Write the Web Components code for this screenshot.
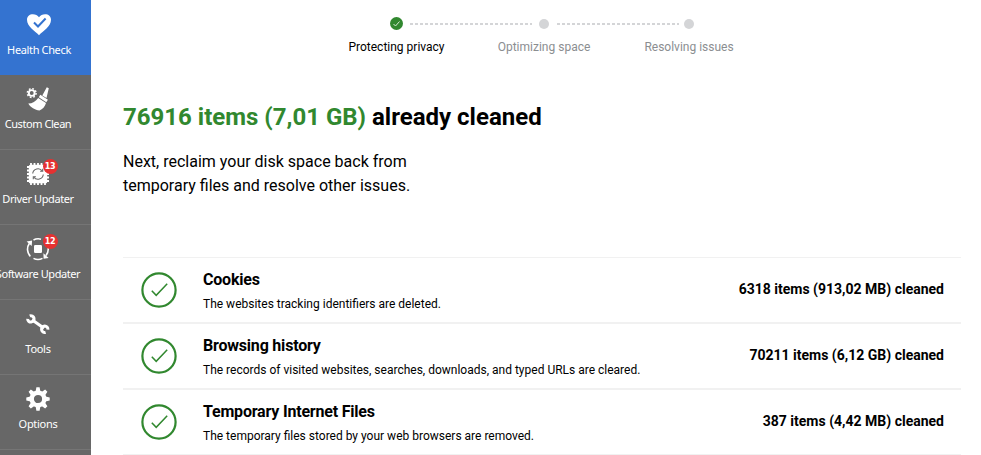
<!DOCTYPE html>
<html lang="en">
<head>
<meta charset="utf-8">
<title>Health Check</title>
<style>
html,body{margin:0;height:100%;overflow:hidden;background:#fff}
</style>
</head>
<body>
<cleaner-app></cleaner-app>
<script>
const define = (name, css, html, init) => customElements.define(name, class extends HTMLElement {
  constructor() {
    super();
    this.attachShadow({ mode: 'open' });
  }
  connectedCallback() {
    this.shadowRoot.innerHTML = `<style>*{box-sizing:border-box}${css}</style>${html}`;
    if (init) init(this, this.shadowRoot);
  }
});

const icons = {
  heart: `<g transform="translate(0 -.8)"><path fill="#fff" d="M12 23C8 18.500 0 14.500 0 7.500 0 4 2.600 2 5.900 2c2.600 0 4.700 1.200 6.100 3 1.400-1.800 3.500-3 6.100-3C21.400 2 24 4 24 7.500c0 7-8 11-12 15.500z"/><path d="M7 10.300l4 4 7.600-8" fill="none" stroke="#3473d0" stroke-width="2"/></g>`,
  broom: `<circle cx="5.700" cy="6" r="2.900" fill="none" stroke="#fff" stroke-width="1.900"/><circle cx="5.700" cy="6" r="4.400" fill="none" stroke="#fff" stroke-width="1.500" stroke-dasharray="1.728 1.728"/>
    <path fill="#fff" d="M20.800.2l2 1L20.500 11l-4.200-2.600zM14.300 7.800l7.600 4.900-1.600 2.500-7.500-4.900zM12.200 10.900l7.800 5.200c-1 3.700-3.500 6.300-6.500 7.400-4.500-.5-9-3-11.200-7 4.200-.2 7.400-2.100 9.900-5.600z"/>`,
  chip: `<path stroke="#fff" stroke-width="1.800" d="M5 1v22M8.500 1v22M12 1v22M15.500 1v22M19 1v22M1 5h22M1 8.500h22M1 12h22M1 15.500h22M1 19h22"/><rect x="2.800" y="2.800" width="18.400" height="18.400" rx="1.500" fill="#fff"/>
    <g fill="none" stroke="#676767" stroke-width="1.100"><path d="M6.700 11.500A5.300 5.300 0 0 1 16.300 9M17.300 12.500A5.300 5.300 0 0 1 7.700 15"/><path d="M16.700 6.700v2.600h-2.600M7.300 17.300v-2.600h2.600"/></g>`,
  software: `<g fill="none" stroke="#fff" stroke-width="1.600"><path d="M4.400 19.400A10.300 10.300 0 0 1 3.300 6.500M7.500 3A10.300 10.300 0 0 1 15 2.200M22.100 10.500A10.300 10.300 0 0 1 20 18.500M16.500 21.400A10.300 10.300 0 0 1 7.500 21.400"/></g>
    <rect x="8" y="8" width="8" height="8" rx="1.200" fill="#fff"/><path fill="#fff" d="M.6 4.400l5.500-1-.4 5.500zM17.400 16.300l.2 5.500 5-.9z"/>`,
  wrench: `<path stroke="#fff" stroke-width="3" d="M6 7.800l12 8.400"/>
    <g fill="none" stroke="#fff" stroke-width="3"><path d="M3.200 4.200A3.200 3.200 0 1 0 6.800 4.200" transform="rotate(-55 5 7)"/><path d="M17.200 15.200A3.200 3.200 0 1 0 20.800 15.200" transform="rotate(130 19 17.500)"/></g>`,
  gear: `<circle cx="12" cy="12" r="6.300" fill="none" stroke="#fff" stroke-width="4.400"/>
    <g fill="#fff"><path d="M9.600 4.500l.8-4.200h3.200l.8 4.200zM9.600 19.500l.8 4.200h3.200l.8-4.200zM4.500 9.600L.3 10.400v3.200l4.200.8zM19.500 9.600l4.200.8v3.200l-4.200.8z"/><path transform="rotate(45 12 12)" d="M9.600 4.500l.8-4.200h3.200l.8 4.200zM9.600 19.500l.8 4.200h3.200l.8-4.200zM4.500 9.600L.3 10.400v3.200l4.200.8zM19.500 9.600l4.200.8v3.200l-4.200.8z"/></g>`
};

define('nav-item', `
  :host{display:flex;flex-direction:column;align-items:center;width:76px;height:75px;padding-top:12px;position:relative}
  svg{display:block;width:24px;height:24px;flex:none}
  .label{margin-top:5px;white-space:nowrap;line-height:16px}
  .badge{position:absolute;left:42.500px;top:9px;width:15px;height:15px;border-radius:50%;background:#e63131;font:bold 8px/15px "DejaVu Sans",sans-serif;letter-spacing:-.2px;text-align:center}
  .badge:empty{display:none}
`, `<svg viewBox="0 0 24 24"></svg><span class="label"><slot></slot></span><span class="badge"></span>`, (el, root) => {
  root.querySelector('svg').innerHTML = icons[el.getAttribute('icon')];
  root.querySelector('.badge').textContent = el.getAttribute('badge') || '';
  root.querySelector('.label').style.letterSpacing = el.getAttribute('tracking') || '';
});

define('side-nav', `
  :host{display:flex;flex-direction:column;width:91px;height:455px;background:#676767;overflow:hidden;color:#fff;font:11px "Noto Sans",sans-serif}
  .row{flex:none;height:75px;border-bottom:1px solid #757575}
  .row.active{background:#3473d0;border:0;padding:1px 0 0 1px}
`, `
  <div class="row active"><nav-item icon="heart" tracking="-.36px">Health Check</nav-item></div>
  <div class="row"><nav-item icon="broom" tracking="-.44px">Custom Clean</nav-item></div>
  <div class="row"><nav-item icon="chip" badge="13" tracking="-.4px">Driver Updater</nav-item></div>
  <div class="row"><nav-item icon="software" badge="12" tracking="-.42px">Software Updater</nav-item></div>
  <div class="row"><nav-item icon="wrench" tracking="-.3px">Tools</nav-item></div>
  <div class="row"><nav-item icon="gear" tracking="-.3px">Options</nav-item></div>
  <div class="row"></div>
`);

define('progress-step', `
  :host{display:flex;flex-direction:column;align-items:center;color:#8b8e91;font-size:12px}
  .dot{height:14px;display:flex;align-items:center}
  i{width:10px;height:10px;border-radius:50%;background:#d4d5d7}
  svg{display:none;width:13px;height:13px;margin-bottom:1px}
  :host([done]){color:#000}
  :host([done]) i{display:none}
  :host([done]) svg{display:block}
  span{white-space:nowrap;line-height:16px;margin-top:8px}
`, `<div class="dot"><i></i><svg viewBox="0 0 13 13"><circle cx="6.500" cy="6.500" r="6.500" fill="#31882f"/><path d="M3.500 7l2 2 4-4.500" fill="none" stroke="#d5ead3"/></svg></div><span><slot></slot></span>`);

define('progress-steps', `
  :host{display:flex;padding-left:292px}
  .line{width:122px;height:2px;margin-top:6px;background:repeating-linear-gradient(90deg,#d4d5d7 0 3px,transparent 3px 5px)}
`, `
  <progress-step done style="width:27px">Protecting privacy</progress-step><div class="line"></div>
  <progress-step style="width:24px">Optimizing space</progress-step><div class="line" style="margin-left:1px"></div>
  <progress-step style="width:20px">Resolving issues</progress-step>
`);

define('result-row', `
  :host{display:flex;align-items:center;height:66px;border-top:1px solid #f1f1f1;border-bottom:1px solid #f1f1f1;padding:0 17px 0 18px}
  svg{width:36px;height:36px;margin-top:.5px;flex:none}
  .text{margin-left:26px;flex:1}
  h2{margin:0;font-size:16px;font-weight:700;letter-spacing:-.2px;line-height:24px}
  p{margin:3px 0 0;font-size:12px;line-height:18px}
  .amount{font-size:14px;font-weight:700;margin-top:-3px}
`, `<svg viewBox="0 0 36 36" fill="none" stroke="#31882f"><circle cx="18" cy="18" r="16.600" stroke-width="2.200"/><path d="M10.800 18.700l4.400 4.600 11-11.500" stroke-width="1.500"/></svg>
  <div class="text"><h2></h2><p><slot></slot></p></div><div class="amount"></div>`, (el, root) => {
  root.querySelector('h2').textContent = el.getAttribute('heading');
  root.querySelector('.amount').textContent = el.getAttribute('amount');
});

define('cleaner-app', `
  :host{display:flex;width:981px;height:455px;overflow:hidden;font-family:Roboto,sans-serif;color:#000}
  main{flex:1;padding:17px 20px 0 0}
  .content{padding-left:32px}
  h1{margin:46px 0 0;font-size:24px;font-weight:700;line-height:32px}
  h1 em{font-style:normal;color:#31882f}
  .next{margin:17px 0 0;font-size:16px;line-height:24px}
  .results{margin-top:59px}
`, `<side-nav></side-nav><main>
  <progress-steps></progress-steps>
  <div class="content">
    <h1><em>76916 items (7,01 GB)</em> already cleaned</h1>
    <p class="next">Next, reclaim your disk space back from<br>temporary files and resolve other issues.</p>
    <div class="results">
      <result-row heading="Cookies" amount="6318 items (913,02 MB) cleaned">The websites tracking identifiers are deleted.</result-row>
      <result-row heading="Browsing history" amount="70211 items (6,12 GB) cleaned">The records of visited websites, searches, downloads, and typed URLs are cleared.</result-row>
      <result-row heading="Temporary Internet Files" amount="387 items (4,42 MB) cleaned">The temporary files stored by your web browsers are removed.</result-row>
    </div>
  </div></main>`);
</script>
</body>
</html>
